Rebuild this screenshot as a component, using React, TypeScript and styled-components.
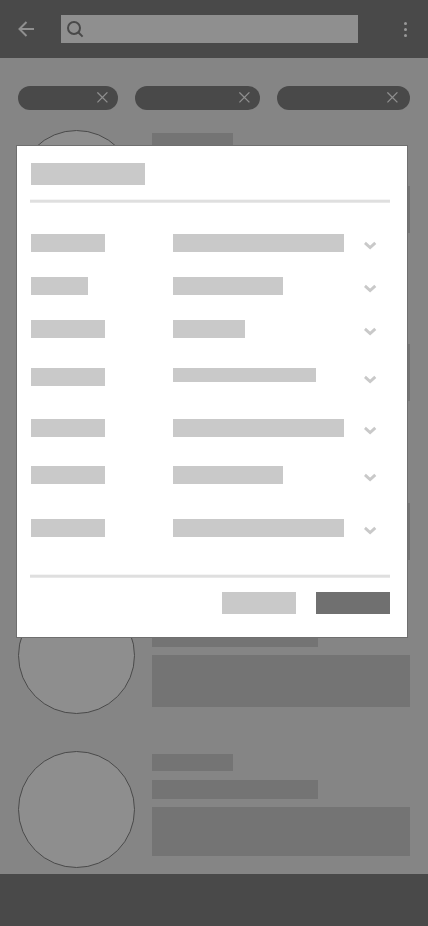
import React from "react";
import styled, { createGlobalStyle } from "styled-components";

const GlobalStyle = createGlobalStyle`
  *, *::before, *::after { box-sizing: border-box; }
  body { margin: 0; background: #858585; font-family: "Liberation Sans", sans-serif; }
  button { border: 0; padding: 0; background: none; }
  svg { display: block; }
`;

const Screen = styled.div`
  position: relative;
  display: flex;
  flex-direction: column;
  width: 428px;
  height: 926px;
  overflow: hidden;
  background: #858585;
`;

const Header = styled.header`
  display: flex;
  align-items: center;
  flex: none;
  height: 58px;
  padding: 0 18px;
  background: #494949;
`;

const IconButton = styled.button`
  flex: none;
  width: 16px;
  height: 16px;
`;

const SearchField = styled.div`
  display: flex;
  align-items: center;
  width: 297px;
  height: 28px;
  margin: 0 auto 0 27px;
  padding-left: 6px;
  background: #8f8f8f;
`;

const MoreButton = styled.button`
  width: 3px;
  height: 15px;
  margin: 1px 3px 0 0;
`;

const Chips = styled.div`
  display: flex;
  flex: none;
  gap: 17px;
  padding: 28px 18px 20px;
`;

const Chip = styled.div<{ $width: number; $inset?: number }>`
  display: flex;
  justify-content: flex-end;
  width: ${(p) => p.$width}px;
  height: 24px;
  padding: 6px ${(p) => p.$inset ?? 10}px 0 0;
  border-radius: 12px;
  background: #494949;
`;

const Feed = styled.main`
  flex: 1;
  min-height: 0;
  overflow: hidden;
  padding: 0 18px;
`;

const Card = styled.article<{ $height: number }>`
  display: flex;
  gap: 17px;
  height: ${(p) => p.$height}px;
`;

const Avatar = styled.div`
  flex: none;
  width: 117px;
  height: 117px;
  border: 1px solid #4a4a4a;
  border-radius: 50%;
  background: #8e8e8e;
`;

const Details = styled.div`
  display: flex;
  flex-direction: column;
  flex: 1;
  padding-top: 3px;
`;

const Name = styled.div`
  width: 81px;
  height: 17px;
  margin-bottom: 9px;
  background: #747474;
`;

const Subtitle = styled.div<{ $height: number }>`
  width: 166px;
  height: ${(p) => p.$height}px;
  margin-bottom: 8px;
  background: #747474;
`;

const Summary = styled.div<{ $height: number }>`
  height: ${(p) => p.$height}px;
  background: #747474;
`;

const BottomBar = styled.footer`
  flex: none;
  height: 52px;
  background: #494949;
`;

const Dialog = styled.section`
  position: absolute;
  top: 145px;
  left: 16px;
  width: 392px;
  height: 493px;
  padding: 17px 17px 0 13px;
  border: 1px solid #6f6f6f;
  background: #fff;
`;

const DialogTitle = styled.div`
  width: 114px;
  height: 22px;
  margin: 0 0 14px 1px;
  background: #c9c9c9;
`;

const Divider = styled.div`
  height: 4px;
  background: linear-gradient(#f5f5f5 1px, #dfdfdf 1px 3px, #e8e8e8 3px);
`;

const Fields = styled.div`
  height: 371px;
  padding: 31px 0 0 1px;
`;

const FieldRow = styled.div<{ $gap: number }>`
  display: grid;
  grid-template-columns: 142px 191px 13px;
  align-items: start;
  height: 18px;
  margin-bottom: ${(p) => p.$gap}px;
`;

const Label = styled.div<{ $width: number }>`
  width: ${(p) => p.$width}px;
  height: 18px;
  background: #c9c9c9;
`;

const Value = styled(Label)<{ $height: number }>`
  height: ${(p) => p.$height}px;
`;

const ChevronSlot = styled.div`
  padding-top: 7px;
`;

const Actions = styled.div`
  display: flex;
  justify-content: flex-end;
  gap: 20px;
  padding-top: 14px;
`;

const ActionButton = styled.button<{ $primary?: boolean }>`
  width: 74px;
  height: 22px;
  background: ${(p) => (p.$primary ? "#707070" : "#c9c9c9")};
`;

const BackIcon = () => (
  <svg width="16" height="16" viewBox="0 0 16 16" fill="none" stroke="#8f8f8f" strokeWidth="2">
    <path d="M16 8H1.5M8.5 1L1.5 8L8.5 15" />
  </svg>
);

const SearchIcon = () => (
  <svg width="17" height="17" viewBox="0 0 17 17" fill="none" stroke="#494949" strokeWidth="2">
    <circle cx="7" cy="7" r="6" />
    <path d="M11 11L15.6 15.6" />
  </svg>
);

const MoreIcon = () => (
  <svg width="3" height="15" viewBox="0 0 3 15" fill="#999">
    <circle cx="1.5" cy="1.5" r="1.5" />
    <circle cx="1.5" cy="7.5" r="1.5" />
    <circle cx="1.5" cy="13.5" r="1.5" />
  </svg>
);

const CloseIcon = () => (
  <svg width="11" height="11" viewBox="0 0 11 11" stroke="#8f8f8f" strokeWidth="1.3">
    <path d="M0.4 0.4L10.4 10.4M10.4 0.4L0.4 10.4" />
  </svg>
);

const ChevronIcon = () => (
  <svg width="13" height="9" viewBox="0 0 13 9" fill="none" stroke="#c9c9c9" strokeWidth="3">
    <path d="M0.9 1.9L6.1 6.5L11.3 1.9" />
  </svg>
);

const chips = [{ width: 100 }, { width: 125 }, { width: 133, inset: 12 }];

const cards = [
  { height: 156, subtitle: 19, summary: 47 },
  { height: 156, subtitle: 21, summary: 57 },
  { height: 155, subtitle: 24, summary: 57 },
  { height: 154, subtitle: 21, summary: 52 },
  { height: 123, subtitle: 19, summary: 49 },
];

const fields = [
  { label: 74, value: 171, gap: 25 },
  { label: 57, value: 110, gap: 25 },
  { label: 74, value: 72, gap: 30 },
  { label: 74, value: 143, valueHeight: 14, gap: 33 },
  { label: 74, value: 171, gap: 29 },
  { label: 74, value: 110, gap: 35 },
  { label: 74, value: 171, gap: 0 },
];

export default function App() {
  return (
    <>
      <GlobalStyle />
      <Screen>
        <Header>
          <IconButton aria-label="Back"><BackIcon /></IconButton>
          <SearchField role="search"><SearchIcon /></SearchField>
          <MoreButton aria-label="More"><MoreIcon /></MoreButton>
        </Header>
        <Chips>
          {chips.map((chip, i) => (
            <Chip key={i} $width={chip.width} $inset={chip.inset}><CloseIcon /></Chip>
          ))}
        </Chips>
        <Feed>
          {cards.map((card, i) => (
            <Card key={i} $height={card.height}>
              <Avatar />
              <Details>
                <Name />
                <Subtitle $height={card.subtitle} />
                <Summary $height={card.summary} />
              </Details>
            </Card>
          ))}
        </Feed>
        <BottomBar />
        <Dialog role="dialog">
          <DialogTitle />
          <Divider />
          <Fields>
            {fields.map((field, i) => (
              <FieldRow key={i} $gap={field.gap}>
                <Label $width={field.label} />
                <Value $width={field.value} $height={field.valueHeight ?? 18} />
                <ChevronSlot><ChevronIcon /></ChevronSlot>
              </FieldRow>
            ))}
          </Fields>
          <Divider />
          <Actions>
            <ActionButton aria-label="Cancel" />
            <ActionButton aria-label="Apply" $primary />
          </Actions>
        </Dialog>
      </Screen>
    </>
  );
}
